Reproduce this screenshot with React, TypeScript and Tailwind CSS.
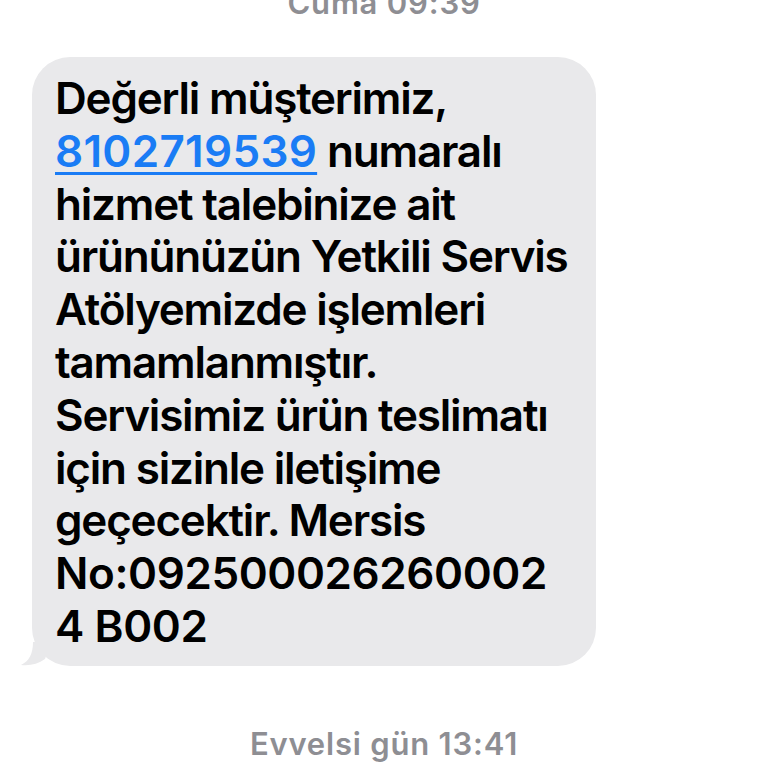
import React from "react";

const lines = [
  "hizmet talebinize ait",
  "ürününüzün Yetkili Servis",
  "Atölyemizde işlemleri",
  "tamamlanmıştır.",
  "Servisimiz ürün teslimatı",
  "için sizinle iletişime",
  "geçecektir. Mersis",
];

export default function App() {
  return (
    <div
      className="h-[768px] w-[768px] overflow-hidden bg-white flex flex-col"
      style={{ fontFamily: "Inter, 'Noto Sans', sans-serif" }}
    >
      <div className="-mt-[17px] h-[40px] text-center text-[31px] leading-[40px] font-semibold text-[#8e8e93] tracking-[0.8px]">
        Cuma 09:39
      </div>

      <div className="mt-[34px] ml-[32px] relative w-[564px]">
        <div className="rounded-[38px] bg-[#e9e9eb] pl-[23px] pr-[10px] pt-[15px] pb-[13px] text-[44px] leading-[52.8px] font-semibold text-black tracking-[-1.2px] whitespace-nowrap">
          <div>Değerli müşterimiz,</div>
          <div>
            <span className="text-[#1a7cf5] tracking-[0.3px] underline decoration-[3px] underline-offset-[5px]">8102719539</span> numaralı
          </div>
          {lines.map((l) => (
            <div key={l}>{l}</div>
          ))}
          <div className="tracking-[-0.4px]">No:092500026260002</div>
          <div className="tracking-[-0.4px]">4 B002</div>
        </div>
        <svg className="absolute -left-[11px] bottom-0" width="30" height="24" viewBox="0 0 30 24">
          <path d="M12 0 C12 12 8 19 0 23 C9 24 17 22 24 17 L30 0 Z" fill="#e9e9eb" />
        </svg>
      </div>

      <div className="mt-[58px] text-center text-[31px] leading-[40px] font-semibold text-[#8e8e93] tracking-[0.8px]">
        Evvelsi gün 13:41
      </div>
    </div>
  );
}
